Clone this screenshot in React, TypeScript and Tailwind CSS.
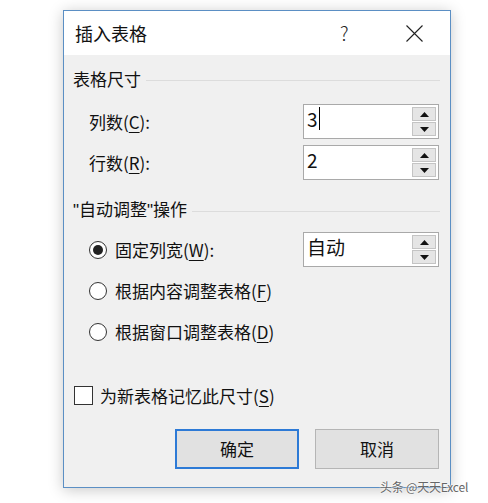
import React from "react";

const font = { fontFamily: '"Noto Sans CJK SC", "Noto Sans", sans-serif' };

function U({ c }: { c: string }) {
  return <span className="underline underline-offset-[3px] decoration-1">{c}</span>;
}

function Q() {
  return <span style={{ fontFamily: '"Liberation Sans", sans-serif' }}>"</span>;
}

function Spin({ value, caret }: { value: string; caret?: boolean }) {
  return (
    <div className="w-[136px] h-[35px] bg-white border border-[#a9a9a9] flex items-center justify-between pl-[3px] pr-[2px]">
      <div className="flex items-center text-[19px] leading-none text-[#111] -mt-[6px]">
        <span>{value}</span>
        {caret && <span className="w-px h-[23px] bg-black ml-px" />}
      </div>
      <div className="flex flex-col gap-px">
        <div className="w-[24px] h-[14px] bg-[#e5e5e5] border border-[#c4c4c4] flex items-center justify-center">
          <svg width="9" height="5" viewBox="0 0 9 5"><path d="M0 5 L4.5 0 L9 5 Z" fill="#111" /></svg>
        </div>
        <div className="w-[24px] h-[14px] bg-[#e5e5e5] border border-[#c4c4c4] flex items-center justify-center">
          <svg width="9" height="5" viewBox="0 0 9 5"><path d="M0 0 L4.5 5 L9 0 Z" fill="#111" /></svg>
        </div>
      </div>
    </div>
  );
}

function Radio({ checked }: { checked?: boolean }) {
  return (
    <div className="w-[18px] h-[18px] rounded-full border border-[#333] bg-white flex items-center justify-center shrink-0">
      {checked && <div className="w-[10px] h-[10px] rounded-full bg-[#222]" />}
    </div>
  );
}

export default function App() {
  return (
    <div className="w-[488px] h-[503px] bg-white relative overflow-hidden" style={font}>
      <div className="ml-[63px] mt-[10px] w-[388px] h-[478px] border border-[#5b8fc4] bg-[#f0f0f0] flex flex-col shadow-[0_2px_14px_rgba(0,0,0,0.22)] text-[17px] text-[#111]">
        <div className="h-[44px] bg-white flex items-center pl-[11px] shrink-0">
          <span className="text-[18px]">插入表格</span>
          <span className="ml-[193px] text-[19px] font-light text-[#222]">?</span>
          <svg className="ml-[57px]" width="17" height="17" viewBox="0 0 17 17">
            <path d="M0.5 0.5 L16.5 16.5 M16.5 0.5 L0.5 16.5" stroke="#222" strokeWidth="1.1" />
          </svg>
        </div>
        <div className="flex flex-col pl-[9px] pr-[10px]">
          <div className="mt-[12px] h-[24px] flex items-center gap-[5px]">
            <span>表格尺寸</span>
            <div className="flex-1 h-px bg-[#dcdcdc] mt-[2px]" />
          </div>
          <div className="mt-[13px] h-[35px] flex items-center justify-between pl-[16px] pr-[1px]">
            <span>列数(<U c="C" />):</span>
            <Spin value="3" caret />
          </div>
          <div className="mt-[6px] h-[35px] flex items-center justify-between pl-[16px] pr-[1px]">
            <span>行数(<U c="R" />):</span>
            <Spin value="2" />
          </div>
          <div className="mt-[18px] h-[24px] flex items-center gap-[5px]">
            <span><Q />自动调整<Q />操作</span>
            <div className="flex-1 h-px bg-[#dcdcdc] mt-[2px]" />
          </div>
          <div className="mt-[10px] h-[35px] flex items-center justify-between pl-[16px] pr-[1px]">
            <div className="flex items-center gap-[8px]">
              <Radio checked />
              <span>固定列宽(<U c="W" />):</span>
            </div>
            <Spin value="自动" />
          </div>
          <div className="mt-[6px] h-[35px] flex items-center gap-[8px] pl-[16px]">
            <Radio />
            <span>根据内容调整表格(<U c="F" />)</span>
          </div>
          <div className="mt-[6px] h-[35px] flex items-center gap-[8px] pl-[16px]">
            <Radio />
            <span>根据窗口调整表格(<U c="D" />)</span>
          </div>
          <div className="mt-[29px] h-[35px] flex items-center gap-[7px] pl-[1px]">
            <div className="w-[19px] h-[19px] border border-[#333] bg-white shrink-0" />
            <span>为新表格记忆此尺寸(<U c="S" />)</span>
          </div>
          <div className="mt-[16px] flex justify-end gap-[16px] pr-[1px]">
            <button className="w-[124px] h-[40px] bg-[#e1e1e1] border-2 border-[#2d7ad6] text-[17px] flex items-center justify-center">确定</button>
            <button className="w-[124px] h-[40px] bg-[#e1e1e1] border border-[#b5b5b5] text-[17px] flex items-center justify-center">取消</button>
          </div>
        </div>
      </div>
      <div className="absolute left-[380px] top-[478px] text-[12px] text-[#666] tracking-[-0.2px]" style={{ textShadow: "0 0 2px #fff, 0 0 2px #fff" }}>
        头条 @天天Excel
      </div>
    </div>
  );
}
